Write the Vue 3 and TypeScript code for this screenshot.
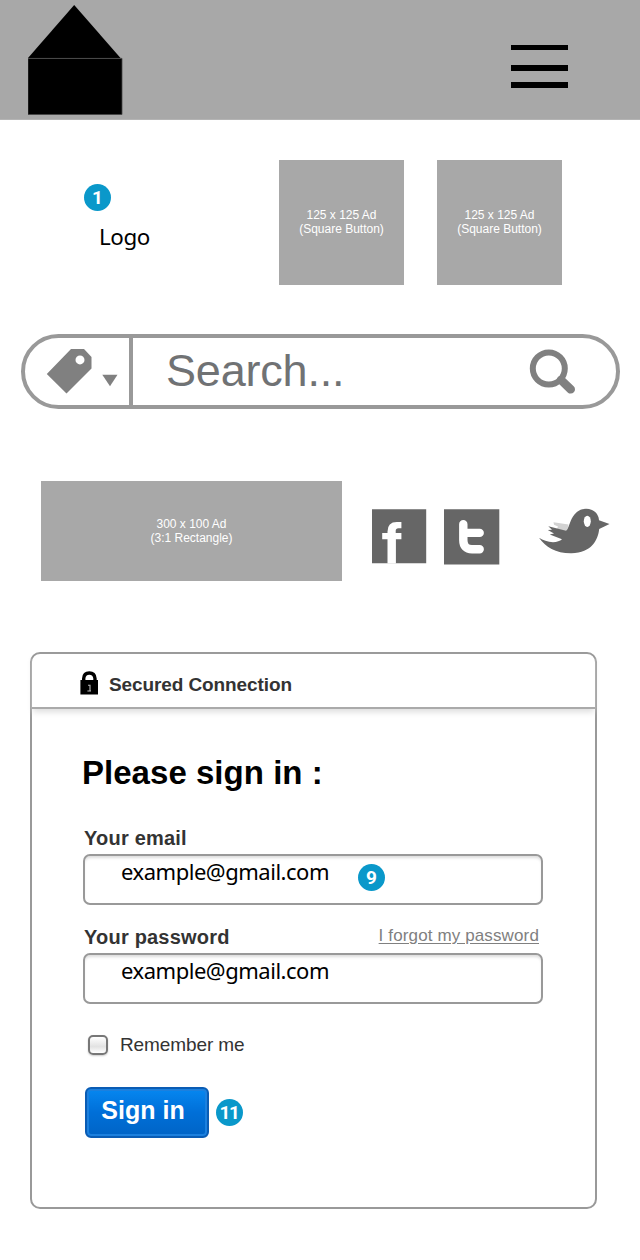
<script setup lang="ts">
import { ref } from 'vue'

interface Ad {
  size: string
  kind: string
}

const squareAds: Ad[] = [
  { size: '125 x 125 Ad', kind: '(Square Button)' },
  { size: '125 x 125 Ad', kind: '(Square Button)' },
]
const bannerAd: Ad = { size: '300 x 100 Ad', kind: '(3:1 Rectangle)' }

const query = ref('')
const email = ref('example@gmail.com')
const password = ref('example@gmail.com')
const remember = ref(false)
</script>

<template>
  <div class="page">
    <header class="topbar">
      <svg class="house" width="96" height="111" viewBox="0 0 96 111" aria-label="Home">
        <path d="M46.2 0 92.5 53H0Z" />
        <path d="M0 53.5H94V109.5H0Z" />
        <path d="M0 53.4H94V109.5H0Z" fill="none" stroke="#444" stroke-width=".8" />
      </svg>
      <button class="menu" aria-label="Menu"><i></i><i></i><i></i></button>
    </header>

    <section class="brand">
      <div class="logo">
        <span class="badge">1</span>
        <span class="logo-text">Logo</span>
      </div>
      <div v-for="(ad, i) in squareAds" :key="i" class="ad square">
        <span>{{ ad.size }}</span><span>{{ ad.kind }}</span>
      </div>
    </section>

    <form class="search" @submit.prevent>
      <button type="button" class="category" aria-label="Category">
        <svg width="100" height="68" viewBox="25 338 100 68">
          <path fill="#808080" fill-rule="evenodd" d="M46.8 374 71 349H84L91.5 357V368.5L66.5 393.5ZM80 355.4a4.5 4.5 0 1 0 0 9 4.5 4.5 0 0 0 0-9Z" />
          <path fill="#808080" d="M102.3 374.8H117.5L110 386.2Z" />
        </svg>
      </button>
      <input v-model="query" class="query" placeholder="Search..." />
      <svg class="lens" width="50" height="50" viewBox="528 347 50 50">
        <circle cx="548.8" cy="368.5" r="16" fill="none" stroke="#808080" stroke-width="6" />
        <path d="m561 380 9.7 9.3" stroke="#808080" stroke-width="8.6" stroke-linecap="round" />
      </svg>
    </form>

    <section class="social">
      <div class="ad banner">
        <span>{{ bannerAd.size }}</span><span>{{ bannerAd.kind }}</span>
      </div>
      <svg class="facebook" width="55" height="55" viewBox="0 0 55 55">
        <path fill="#666" d="M0 .3H54.2V54.3H0Z" />
        <path fill="#fff" d="M15.5 54.5V30.2H10.2V24.1H15.5V22.5Q15.5 12.9 24.8 12.9H29.4V19.2H26.4Q23.7 19.2 23.7 21.8V24.1H29.4V30.2H23.9V54.5Z" />
      </svg>
      <svg class="twitter" width="56" height="56" viewBox="0 0 56 56">
        <path fill="#666" d="M0 .3H55.3V55.6H0Z" />
        <path d="M19.3 15.2V31Q19.3 40.2 28 40.2H35.7M19.5 23.9H35.7" fill="none" stroke="#fff" stroke-width="8.4" stroke-linecap="round" stroke-linejoin="round" />
      </svg>
      <svg class="bird" width="72" height="48" viewBox="538 506 72 48">
        <path fill="#d2d2d2" d="M553.5 522.2 568.5 524.5 567 532 557 528.8 558 526.5 554 524.8Z" />
        <path fill="#666" d="M539 537.7Q545 541.5 553 542.2 559 542 562 539.3L549.8 534.4 554 533.5 547.8 529.9 552 529.7 548.3 526.2 566 530.8C568.5 529.5 569.5 521.5 573 516.5 577.5 509.5 585 507 592 510 597 512 599 517.2 599 520.2L609.5 524 599.2 529.1C598 540 592 552.7 571.5 553.3 556 553.5 545.5 547 539 537.7Z" />
        <ellipse cx="587.3" cy="521.3" rx="3.5" ry="5.6" fill="#fff" />
      </svg>
    </section>

    <main class="card">
      <div class="secured">
        <svg width="20" height="25" viewBox="0 0 20 25">
          <path d="M3.7 11V7.5Q4 2 9.3 2T15 7.5V11" fill="none" stroke="#000" stroke-width="3.4" />
          <path d="M.4 9H18V23.5H.4Z" />
          <path d="M8 14.3H10V19.5M7.4 20H11" stroke="#bbb" stroke-width="1.1" fill="none" />
        </svg>
        <span>Secured Connection</span>
      </div>

      <form class="login" @submit.prevent>
        <h1>Please sign in :</h1>

        <div class="label-row"><label for="email">Your email</label></div>
        <div class="field">
          <input id="email" v-model="email" />
          <span class="badge">9</span>
        </div>

        <div class="label-row second">
          <label for="password">Your password</label>
          <a>I forgot my password</a>
        </div>
        <div class="field">
          <input id="password" v-model="password" />
        </div>

        <label class="remember">
          <input v-model="remember" type="checkbox" />
          <span>Remember me</span>
        </label>

        <div class="actions">
          <button class="signin">Sign in</button>
          <span class="badge eleven">11</span>
        </div>
      </form>
    </main>
  </div>
</template>

<style>
body {
  margin: 0;
  background: #fff;
}
</style>

<style scoped>
* {
  box-sizing: border-box;
}
button,
input {
  font: inherit;
  margin: 0;
  padding: 0;
  border: 0;
  outline: 0;
  background: none;
}
svg {
  display: block;
  flex: none;
}
.page {
  width: 640px;
  height: 1260px;
  overflow: hidden;
  background: #fff;
  font-family: "Liberation Sans", Arial, sans-serif;
}
.topbar {
  height: 120px;
  padding: 5px 71px 0 28px;
  display: flex;
  justify-content: space-between;
  background: #a8a8a8;
  border-bottom: 1px solid #b4b4b4;
}
.menu {
  width: 58px;
  height: 43px;
  margin-top: 40px;
  padding-right: 0.6px;
  display: grid;
  grid-template-rows: 5px 6px 6px;
  align-content: space-between;
}
.menu i {
  background: #000;
}
.menu i:nth-child(2) {
  margin: 1.5px 0 -1.5px;
}
.brand {
  height: 214px;
  padding: 40px 0 0 84px;
  display: flex;
  gap: 33px;
}
.logo {
  width: 162px;
  padding-top: 24px;
}
.logo-text {
  display: block;
  margin: 10px 0 0 15px;
  font: 22.4px/32px "Noto Sans", sans-serif;
  letter-spacing: -0.4px;
}
.badge {
  flex: none;
  width: 27px;
  height: 27px;
  border-radius: 50%;
  display: flex;
  align-items: center;
  justify-content: center;
  background: #0a98ca;
  color: #fff;
  font: 700 19px/27px Roboto, sans-serif;
}
.badge.eleven {
  padding-right: 1px;
  letter-spacing: -1.5px;
}
.ad {
  display: flex;
  flex-direction: column;
  align-items: center;
  justify-content: center;
  background: #a8a8a8;
  color: #fff;
  font-size: 12px;
  line-height: 14px;
}
.square {
  width: 125px;
  height: 125px;
  padding-bottom: 2px;
}
.search {
  width: 599px;
  height: 75px;
  margin-left: 21px;
  display: flex;
  border: 4px solid #999;
  border-radius: 38px;
}
.category {
  width: 108px;
  height: 67px;
  border-right: 4px solid #999;
}
.query {
  width: 363px;
  height: 67px;
  padding: 0 0 1px 33px;
  font-size: 45px;
  letter-spacing: -0.2px;
  color: #707274;
}
.query::placeholder {
  color: #707274;
  opacity: 1;
}
.lens {
  margin: 9px 0 0 32px;
}
.social {
  height: 100px;
  margin: 72px 0 0 41px;
  display: flex;
}
.banner {
  width: 301px;
}
.facebook {
  margin: 28px 0 0 30px;
}
.twitter {
  margin: 28px 0 0 17px;
}
.bird {
  margin: 25px 0 0 38px;
}
.card {
  width: 567px;
  height: 557px;
  margin: 71px 0 0 30px;
  border: 2px solid #999;
  border-radius: 10px;
  color: #333;
}
.secured {
  height: 55px;
  padding: 5px 0 0 48px;
  display: flex;
  align-items: center;
  gap: 9px;
  border-bottom: 2px solid #aaa;
  box-shadow: 0 4px 6px -1px #ddd;
  font-size: 19px;
  font-weight: 700;
  letter-spacing: -0.1px;
}
.secured span {
  padding-top: 3px;
}
.login {
  padding: 0 0 0 52px;
}
h1 {
  margin: 0 0 0 -2px;
  padding: 44px 0 0;
  color: #000;
  font-size: 33px;
  line-height: 40px;
  letter-spacing: 0.03px;
}
.label-row {
  width: 455px;
  height: 24px;
  margin-top: 33px;
  display: flex;
  align-items: flex-start;
  justify-content: space-between;
  font-size: 20px;
  line-height: 24px;
  font-weight: 700;
  letter-spacing: 0.2px;
}
.label-row.second {
  margin-top: 20px;
}
.label-row a {
  color: #808080;
  font-size: 17px;
  line-height: 21px;
  font-weight: 400;
  letter-spacing: 0.13px;
  text-decoration: underline;
  text-underline-offset: 2px;
}
.field {
  width: 460px;
  height: 51px;
  margin: 4px 0 0 -1px;
  padding-left: 36px;
  display: flex;
  align-items: flex-start;
  border: 2px solid #999;
  border-radius: 7px;
  box-shadow: inset 0 3px 3px -1px #ddd;
}
.field input {
  width: 237px;
  height: 34px;
  margin-top: -2px;
  color: #000;
  font: 22px/34px "Noto Sans", sans-serif;
  letter-spacing: -0.47px;
}
.field .badge {
  margin-top: 8px;
}
.remember {
  height: 24px;
  margin: 29px 0 0 4px;
  display: flex;
  align-items: center;
  gap: 12px;
  font-size: 19px;
  letter-spacing: -0.1px;
}
.remember input {
  appearance: none;
  width: 20px;
  height: 20px;
  border: 2px solid #777;
  border-radius: 5px;
  background: linear-gradient(#fff, #e2e2e2 60%, #fff);
  box-shadow: 0 1px 2px #ccc;
}
.actions {
  margin-top: 30px;
  display: flex;
  align-items: center;
  gap: 7px;
}
.signin {
  width: 124px;
  height: 51px;
  margin-left: 1px;
  padding: 0 8px 5px 0;
  border: 2px solid #0a5cb4;
  border-radius: 6px;
  background: linear-gradient(#0687f0, #006fd8 50%, #0064c6);
  box-shadow: inset 0 0 0 2px #1c80de;
  color: #fff;
  font-size: 25px;
  font-weight: 700;
}
</style>
